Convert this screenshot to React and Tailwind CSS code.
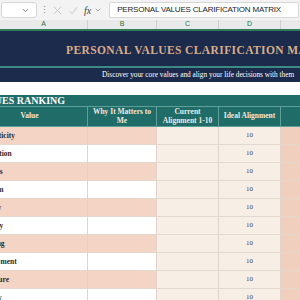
import { ChevronDown } from 'lucide-react';

const values = [
    'Authenticity',
    'Connection',
    'Progress',
    'Freedom',
    'Honesty',
    'Integrity',
    'Learning',
    'Achievement',
    'Adventure',
    'Security',
];

function Row({ value, i }) {
    const alt = i % 2 === 0 ? 'bg-[#f3d4c5]' : 'bg-white';
    return (
        <div className="flex h-[18px] border-b border-[#e4d8ce]">
            <div className={`w-[116px] shrink-0 flex items-center pl-[3px] text-[7.5px] font-bold text-[#2a2a2a] border-r border-[#e0d4ca] ${alt}`}>
                {value}
            </div>
            <div className={`w-[69px] shrink-0 border-r border-[#e0d4ca] ${alt}`}></div>
            <div className="w-[62px] shrink-0 bg-[#f7eee6] border-r border-[#e0d4ca]"></div>
            <div className="w-[62px] shrink-0 bg-[#f7eee6] border-r border-[#e0d4ca] flex items-center justify-center text-[7px] text-[#444]">
                10
            </div>
            <div className="w-[80px] shrink-0 bg-[#f0cfbf]"></div>
        </div>
    );
}

export default function App() {
    return (
        <div className="w-[300px] h-[300px] overflow-hidden bg-white font-['Liberation_Serif',serif]">
            {/* formula bar */}
            <div className="h-[20px] bg-[#f3f3f3] flex items-center gap-[3px] px-[1px] font-['Liberation_Sans',sans-serif]">
                <div className="w-[36px] h-[16px] bg-white border border-[#d6d6d6] rounded-[3px] flex items-center justify-end pr-[6px]">
                    <ChevronDown className="w-[9px] h-[9px] text-[#555]" strokeWidth={2} />
                </div>
                <div className="text-[9px] text-[#888] w-[6px] text-center leading-none">⋮</div>
                <div className="flex items-center gap-[6px] px-[4px] text-[#c4c4c4]">
                    <svg width="9" height="9" viewBox="0 0 10 10"><path d="M1 1L9 9M9 1L1 9" stroke="currentColor" strokeWidth="1" /></svg>
                    <svg width="10" height="9" viewBox="0 0 10 10"><path d="M1 5.5L4 8.5L9.5 1.5" stroke="currentColor" strokeWidth="1" fill="none" /></svg>
                    <span className="text-[10px] italic text-[#444] font-['Liberation_Serif',serif]">fx</span>
                    <ChevronDown className="w-[8px] h-[8px] text-[#777] -ml-[3px]" strokeWidth={2} />
                </div>
                <div className="flex-1 h-[16px] bg-white border border-[#d6d6d6] rounded-[2px] flex items-center pl-[7px] text-[8px] tracking-[-0.2px] text-[#222] whitespace-nowrap overflow-hidden">
                    PERSONAL VALUES CLARIFICATION MATRIX
                </div>
            </div>

            {/* column letters */}
            <div className="h-[11px] bg-[#e9e9e9] border-b-2 border-[#2e7d5b] flex font-['Liberation_Sans',sans-serif] text-[7px] text-[#217346]">
                <div className="w-[88px] shrink-0 flex items-center justify-center border-r border-[#cfcfcf]">A</div>
                <div className="w-[69px] shrink-0 flex items-center justify-center border-r border-[#cfcfcf]">B</div>
                <div className="w-[62px] shrink-0 flex items-center justify-center border-r border-[#cfcfcf]">C</div>
                <div className="w-[62px] shrink-0 flex items-center justify-center border-r border-[#cfcfcf]">D</div>
                <div className="flex-1"></div>
            </div>

            {/* title band */}
            <div className="h-[35px] bg-[#1c2a4b] flex items-end pb-[10px] pl-[66px] whitespace-nowrap">
                <span className="text-[11.5px] font-bold tracking-[0.4px] text-[#d6ae8c] leading-none">
                    PERSONAL VALUES CLARIFICATION MATRIX
                </span>
            </div>
            <div className="h-[2px] bg-[#3b8a84]"></div>
            <div className="h-[14px] bg-[#1c2a4b] flex items-center pl-[102px] whitespace-nowrap">
                <span className="text-[7.3px] text-white leading-none">
                    Discover your core values and align your life decisions with them
                </span>
            </div>
            <div className="h-[13px] bg-white"></div>

            {/* table */}
            <div className="overflow-hidden">
                <div className="-ml-[28px] w-[400px]">
                    <div className="h-[12px] bg-[#1f6c68] flex items-center pl-[3px] border-b border-[#5f9f9a]">
                        <span className="text-[10px] font-bold text-white leading-none">VALUES RANKING</span>
                    </div>
                    <div className="h-[20px] bg-[#1f6c68] flex text-[7.5px] font-bold text-[#f1e9df] leading-[8.5px] text-center border-b border-[#5f9f9a]">
                        <div className="w-[116px] shrink-0 flex items-center justify-center border-r border-[#5f9f9a]">Value</div>
                        <div className="w-[69px] shrink-0 flex items-center justify-center border-r border-[#5f9f9a]">Why It Matters to<br />Me</div>
                        <div className="w-[62px] shrink-0 flex items-center justify-center border-r border-[#5f9f9a]">Current<br />Alignment 1-10</div>
                        <div className="w-[62px] shrink-0 flex items-center justify-center border-r border-[#5f9f9a]">Ideal Alignment</div>
                        <div className="w-[80px] shrink-0"></div>
                    </div>
                    {values.map((v, i) => (
                        <Row key={v} value={v} i={i} />
                    ))}
                </div>
            </div>
        </div>
    );
}
